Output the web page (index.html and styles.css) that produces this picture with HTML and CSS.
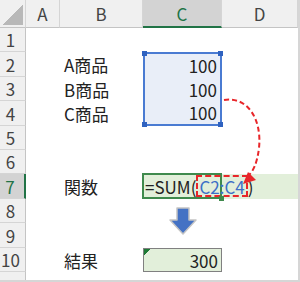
FILE: index.html
```html
<!DOCTYPE html>
<html lang="ja">
  <head>
    <meta charset="UTF-8" />
    <meta name="viewport" content="width=device-width, initial-scale=1.0" />
    <title>SUM</title>
    <link rel="stylesheet" href="styles.css">
  </head>
  <body>
    <div class="sheet">
      <div class="hd corner"></div>
      <div class="hd col">A</div>
      <div class="hd col">B</div>
      <div class="hd col on">C</div>
      <div class="hd col">D</div>

      <div class="hd row">1</div>
      <div class="cell"></div>
      <div class="cell"></div>
      <div class="cell"></div>
      <div class="cell"></div>

      <div class="hd row">2</div>
      <div class="cell"></div>
      <div class="cell lbl">A商品</div>
      <div class="cell num rng top">100</div>
      <div class="cell"></div>

      <div class="hd row">3</div>
      <div class="cell"></div>
      <div class="cell lbl">B商品</div>
      <div class="cell num rng">100</div>
      <div class="cell"></div>

      <div class="hd row">4</div>
      <div class="cell"></div>
      <div class="cell lbl">C商品</div>
      <div class="cell num rng bot">100</div>
      <div class="cell"></div>

      <div class="hd row">5</div>
      <div class="cell"></div>
      <div class="cell"></div>
      <div class="cell"></div>
      <div class="cell"></div>

      <div class="hd row">6</div>
      <div class="cell"></div>
      <div class="cell"></div>
      <div class="cell"></div>
      <div class="cell"></div>

      <div class="hd row on">7</div>
      <div class="cell"></div>
      <div class="cell lbl">関数</div>
      <div class="cell edit">=SUM(<span class="ref">C2:C4</span>)</div>
      <div class="cell fill"></div>

      <div class="hd row">8</div>
      <div class="cell"></div>
      <div class="cell"></div>
      <div class="cell"></div>
      <div class="cell"></div>

      <div class="hd row">9</div>
      <div class="cell"></div>
      <div class="cell"></div>
      <div class="cell"></div>
      <div class="cell"></div>

      <div class="hd row">10</div>
      <div class="cell"></div>
      <div class="cell lbl">結果</div>
      <div class="cell num res">300</div>
      <div class="cell"></div>

      <div class="hd row last">11</div>
      <div class="cell"></div>
      <div class="cell"></div>
      <div class="cell"></div>
      <div class="cell"></div>

      <!-- 矢印 -->
      <svg class="marks" width="298" height="280" viewBox="0 0 298 280">
        <path d="M224 100 C248 96 262 120 259 148 C257 164 253 171 249 175" fill="none" stroke="#e8262a" stroke-width="2" stroke-dasharray="5 3" />
        <polygon points="243,184 248,172 256,180" fill="#e8262a" />
        <polygon points="177,208 189,208 189,220 196,220 183,234 170,220 177,220" fill="#4472c4" stroke="#c4c4c4" stroke-width="1.5" stroke-linejoin="round" />
      </svg>
    </div>
  </body>
</html>
```

FILE: styles.css
```css
* {
  margin: 0;
  padding: 0;
  box-sizing: border-box;
}
body {
  width: 300px;
  height: 282px;
  background-color: #fff;
  font-family: "Noto Sans CJK JP", "Noto Sans", sans-serif;
  color: #222;
}
.sheet {
  position: relative;
  display: grid;
  grid-template-columns: 26px 34px 83px 79px 76px;
  grid-template-rows: 28px 24px 25px 24px 25px 24px 24px 25px 24px 25px 24px 24px;
  width: 300px;
  height: 282px;
  border-right: 2px solid #d6d6d6;
  border-bottom: 2px solid #d6d6d6;
  overflow: hidden;
}
.cell,
.hd {
  display: flex;
  align-items: center;
  font-size: 17px;
  line-height: 1;
  white-space: nowrap;
}
.hd {
  justify-content: center;
  background-color: #f0f0f0;
  color: #444;
}
.col {
  border-right: 1px solid #d5d5d5;
  border-bottom: 1px solid #c4c4c4;
}
.corner {
  border-right: 1px solid #d5d5d5;
  border-bottom: 1px solid #c4c4c4;
  background: linear-gradient(to bottom right, transparent 50%, #b8b8b8 50%) no-repeat right 2px bottom 2px / 20px 20px, #f0f0f0;
}
.row {
  padding-right: 4px;
  border-right: 1px solid #c4c4c4;
  border-bottom: 1px solid #d5d5d5;
}
.row.last {
  align-items: flex-start;
  padding-top: 5px;
}
.col.on {
  background-color: #d3d3d3;
  color: #217346;
  border-bottom: 2px solid #217346;
}
.row.on {
  background-color: #d3d3d3;
  color: #217346;
  border-right: 2px solid #217346;
}
.lbl {
  padding-left: 4px;
}
.num {
  justify-content: flex-end;
  padding-right: 3px;
}
.rng {
  position: relative;
  background-color: #e9eef8;
  border-left: 2px solid #4a7bd2;
  border-right: 2px solid #4a7bd2;
}
.rng.top {
  border-top: 2px solid #4a7bd2;
}
.rng.bot {
  border-bottom: 2px solid #4a7bd2;
}
.rng.top::before,
.rng.top::after,
.rng.bot::before,
.rng.bot::after {
  content: "";
  position: absolute;
  width: 5px;
  height: 5px;
  background-color: #2f62c0;
}
.rng.top::before {
  left: -3px;
  top: -3px;
}
.rng.top::after {
  right: -3px;
  top: -3px;
}
.rng.bot::before {
  left: -3px;
  bottom: -3px;
}
.rng.bot::after {
  right: -3px;
  bottom: -3px;
}
.edit {
  position: relative;
  z-index: 1;
  margin: -1px 0 0 -1px;
  padding-left: 1px;
  background-color: #e2efda;
  border: 2px solid #3f8a4d;
}
.edit::after {
  content: "";
  position: absolute;
  right: -4px;
  bottom: -4px;
  width: 5px;
  height: 5px;
  background-color: #3f8a4d;
}
.ref {
  color: #3d6fc7;
  border: 2px dashed #e8262a;
  padding: 1px 1px 0;
}
.fill {
  background-color: #e2efda;
}
.res {
  background: linear-gradient(to bottom right, #1e7a36 50%, transparent 50%) no-repeat 0 0 / 7px 7px, #e2efda;
  border: 1px solid #808080;
}
.marks {
  position: absolute;
  left: 0;
  top: 0;
  z-index: 2;
  pointer-events: none;
}
```
